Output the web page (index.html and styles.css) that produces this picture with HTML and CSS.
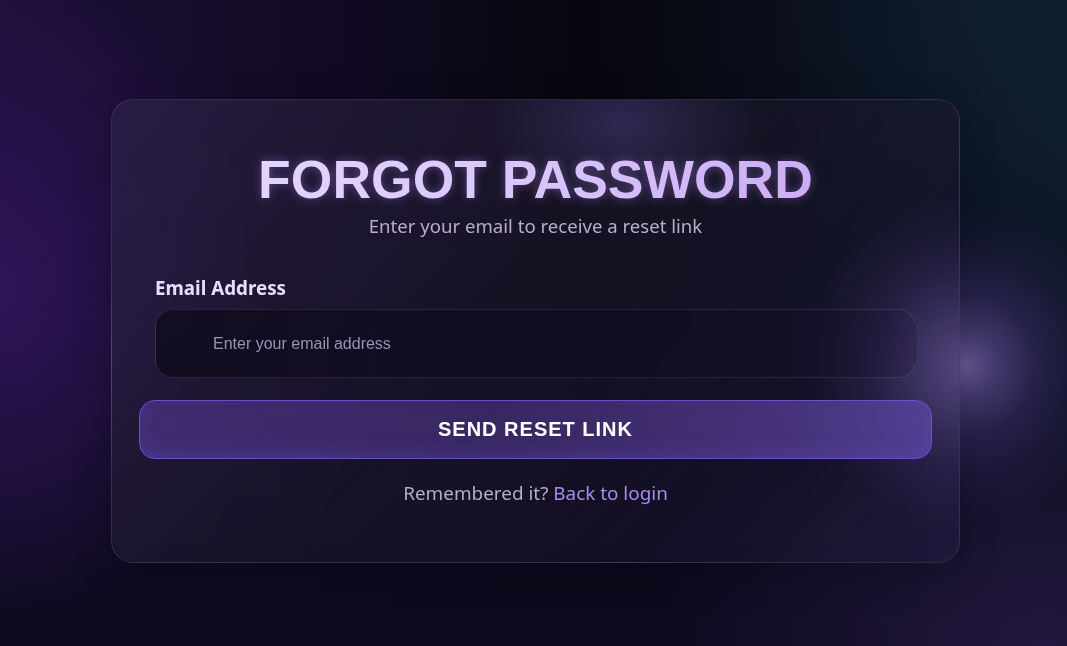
FILE: index.html
```html
<!DOCTYPE html>
<html lang="en">
<head>
<meta charset="utf-8">
<title>Forgot Password</title>
<link rel="stylesheet" href="styles.css">
</head>
<body>
<main class="page">
  <section class="card">
    <h1 class="title">FORGOT PASSWORD</h1>
    <p class="subtitle">Enter your email to receive a reset link</p>
    <form class="form">
      <label class="label" for="email">Email Address</label>
      <input class="input" id="email" type="email" placeholder="Enter your email address">
      <button class="btn" type="button">SEND RESET LINK</button>
    </form>
    <p class="footer">Remembered it? <a class="link" href="#">Back to login</a></p>
  </section>
</main>
</body>
</html>
```

FILE: styles.css
```css
* { box-sizing: border-box; }
html, body { margin: 0; height: 100%; }
body {
  overflow: hidden;
  font-family: "Noto Sans", "Open Sans", sans-serif;
  background:
    radial-gradient(circle 160px at 965px 365px, rgba(108, 92, 152, 0.95) 0%, rgba(88, 72, 138, 0.7) 20%, rgba(66, 50, 116, 0.45) 45%, rgba(52, 38, 100, 0.2) 72%, rgba(50, 34, 95, 0) 100%),
    radial-gradient(ellipse 260px 330px at 0% 45%, rgba(50, 22, 95, 0.85) 0%, rgba(40, 20, 80, 0) 100%),
    radial-gradient(ellipse 300px 200px at 100% 0%, rgba(16, 34, 46, 0.7) 0%, rgba(16, 34, 46, 0) 100%),
    radial-gradient(ellipse 380px 260px at 98% 100%, rgba(40, 26, 70, 0.8) 0%, rgba(40, 26, 70, 0) 100%),
    linear-gradient(180deg, rgba(14, 10, 31, 0) 0%, rgba(14, 10, 31, 0) 20%, #0d0a1e 100%),
    linear-gradient(90deg, #1c0f37 0%, #120a24 30%, #07060e 55%, #0b1220 80%, #0e1c2a 100%);
}
.page {
  padding: 99px 0 0 111px;
}
.card {
  width: 849px;
  height: 464px;
  border-radius: 22px;
  border: 1px solid rgba(255, 255, 255, 0.1);
  padding: 49px 43px 0;
  background:
    radial-gradient(ellipse 140px 90px at 510px 25px, rgba(70, 64, 125, 0.5) 0%, rgba(70, 64, 125, 0) 100%),
    radial-gradient(ellipse 160px 170px at 855px 266px, rgba(100, 86, 146, 0.45) 0%, rgba(80, 66, 130, 0.15) 60%, rgba(80, 66, 130, 0) 100%),
    linear-gradient(135deg, rgba(45, 34, 72, 0.7) 0%, rgba(30, 25, 45, 0.6) 45%, rgba(30, 24, 50, 0.42) 75%, rgba(45, 36, 80, 0.35) 100%);
  backdrop-filter: blur(10px);
  box-shadow: 0 10px 40px rgba(0, 0, 0, 0.2);
}
.title {
  margin: 0;
  font-family: "Liberation Sans", Arial, sans-serif;
  font-weight: 700;
  font-size: 53.5px;
  line-height: 61px;
  text-align: center;
  color: #d8c4f8;
  background: linear-gradient(90deg, #e6dafc 0%, #d9c5fa 50%, #c9a5f4 100%);
  -webkit-background-clip: text;
  background-clip: text;
  -webkit-text-fill-color: transparent;
  filter: drop-shadow(0 0 5px rgba(180, 140, 250, 0.4));
}
.subtitle {
  margin: 4px 0 0;
  text-align: center;
  font-size: 18.6px;
  line-height: 24px;
  color: #b6aecb;
}
.form {
  display: flex;
  flex-direction: column;
  margin-top: 38px;
}
.label {
  font-size: 18.8px;
  font-weight: 700;
  line-height: 24px;
  color: #e6defb;
}
.input {
  margin-top: 9px;
  height: 69px;
  border-radius: 18px;
  border: 1px solid rgba(255, 255, 255, 0.1);
  background: linear-gradient(90deg, rgba(16, 12, 30, 0.85) 0%, rgba(18, 14, 34, 0.8) 80%, rgba(40, 30, 70, 0.35) 100%);
  padding: 0 20px 0 57px;
  font-family: "Liberation Sans", Arial, sans-serif;
  font-size: 16px;
  color: #e6defb;
  outline: none;
}
.input::placeholder { color: #9a91b4; }
.btn {
  margin: 22px -16px 0;
  height: 59px;
  border-radius: 16px;
  border: 1px solid #6a4fc9;
  background: linear-gradient(90deg, rgba(68, 48, 120, 0.9) 0%, rgba(60, 42, 104, 0.9) 45%, rgba(74, 53, 128, 0.88) 75%, rgba(88, 68, 158, 0.85) 100%);
  box-shadow: inset 0 -8px 16px rgba(100, 70, 190, 0.25);
  font-family: "Liberation Sans", Arial, sans-serif;
  font-weight: 700;
  font-size: 20px;
  letter-spacing: 1px;
  color: #ffffff;
  cursor: pointer;
}
.footer {
  margin: 22px 0 0;
  text-align: center;
  font-size: 18.9px;
  line-height: 24px;
  color: #b5adc8;
}
.link {
  color: #a98be9;
  text-decoration: none;
}
```
